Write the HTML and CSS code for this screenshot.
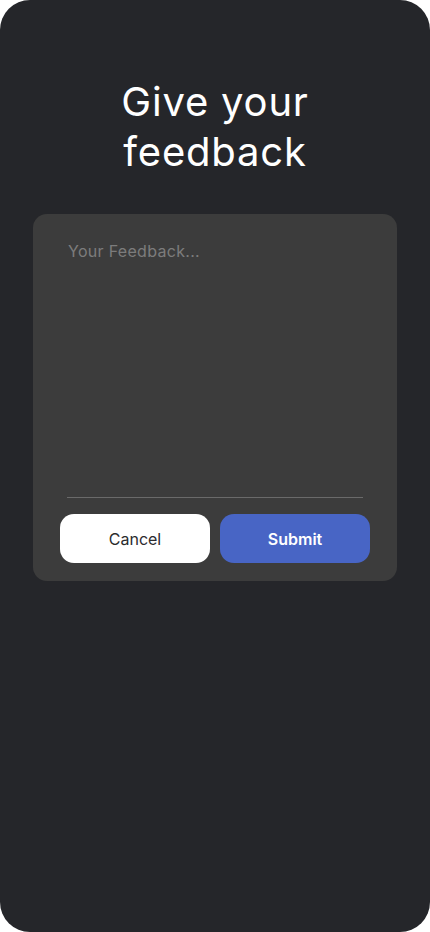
FILE: index.html
```html
<!DOCTYPE html>
<html lang="en">
<head>
<meta charset="utf-8">
<title>Give your feedback</title>
<link rel="stylesheet" href="styles.css">
</head>
<body>
<main class="screen">
  <h1 class="title">Give your<br>feedback</h1>
  <section class="card">
    <div class="field">
      <textarea class="input" placeholder="Your Feedback..."></textarea>
    </div>
    <div class="actions">
      <button class="btn btn-cancel" type="button">Cancel</button>
      <button class="btn btn-submit" type="button">Submit</button>
    </div>
  </section>
</main>
</body>
</html>
```
FILE: styles.css
```css
* { box-sizing: border-box; }
html, body {
  margin: 0;
  padding: 0;
  background: #ffffff;
}
body {
  font-family: Inter, "Noto Sans", sans-serif;
}
.screen {
  width: 430px;
  height: 932px;
  background: #25262a;
  border-radius: 30px;
  padding-top: 77px;
  display: flex;
  flex-direction: column;
  align-items: stretch;
}
.title {
  margin: 0;
  color: #ffffff;
  font-size: 40px;
  line-height: 50px;
  font-weight: 400;
  text-align: center;
  letter-spacing: 0.8px;
}
.card {
  margin: 37px 33px 0;
  background: #3c3c3c;
  border-radius: 14px;
  padding: 0 27px 18px;
  display: flex;
  flex-direction: column;
  gap: 16px;
}
.field {
  margin: 0 7px;
}
.input {
  display: block;
  width: 100%;
  height: 284px;
  padding: 27px 1px 0;
  border: none;
  border-bottom: 1px solid #6a6a6a;
  background: transparent;
  color: #dddddd;
  font-family: Inter, "Noto Sans", sans-serif;
  font-size: 16px;
  letter-spacing: 0.3px;
  resize: none;
  outline: none;
}
.input::placeholder {
  color: #7c7c7c;
}
.actions {
  display: grid;
  grid-template-columns: 1fr 1fr;
  gap: 10px;
}
.btn {
  height: 49px;
  border: none;
  border-radius: 14px;
  font-family: Inter, "Noto Sans", sans-serif;
  font-size: 16px;
  cursor: pointer;
}
.btn-cancel {
  background: #ffffff;
  color: #2b2b2e;
  font-weight: 400;
}
.btn-submit {
  background: #4865c5;
  color: #ffffff;
  font-weight: 600;
}
```
